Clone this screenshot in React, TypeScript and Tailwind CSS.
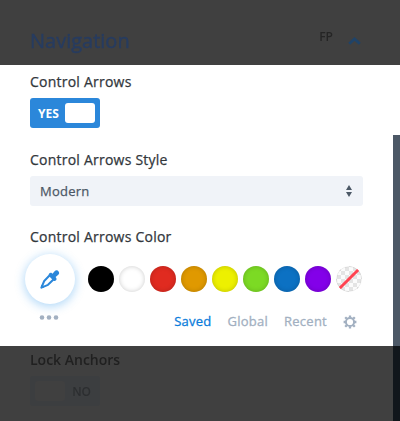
const swatches = [
  'bg-[#000000]',
  'bg-[#ffffff]',
  'bg-[#e02b20]',
  'bg-[#e09900]',
  'bg-[#edf000]',
  'bg-[#7cda24]',
  'bg-[#0c71c3]',
  'bg-[#8300e9]',
];

function Label({ children }: { children: string }) {
  return <div className="h-5 text-[14px] leading-5 font-medium tracking-[0.23px] whitespace-nowrap text-[#32373c] [-webkit-text-stroke:0.25px_#32373c]">{children}</div>;
}

function Header() {
  return (
    <header className="flex h-[65px] justify-between bg-[#404040] pr-[39px] pl-[30px]">
      <h2 className="pt-[27px] text-[20px] leading-7 font-medium text-[#273c60] blur-[0.6px] [-webkit-text-stroke:0.4px_#273c60]">Navigation</h2>
      <div className="flex gap-[15px] pt-[29px]">
        <span className="text-[12px] leading-4 font-semibold text-[#252525] blur-[0.7px]">FP</span>
        <svg className="mt-[8px] h-[8px] w-[13px] blur-[0.3px]" viewBox="0 0 13 8" fill="none" stroke="#1f4368" strokeWidth="2.8">
          <path d="M1.2 6.8 6.5 2 11.8 6.8" />
        </svg>
      </div>
    </header>
  );
}

function Dropper() {
  return (
    <svg className="h-5 w-5" viewBox="0 0 20 20" fill="none">
      <path d="M10.2 5.8 4.2 12 1.4 18.6 8 15.8 14.2 9.8" stroke="#2b87da" strokeWidth="2" strokeLinejoin="round" />
      <path
        d="M9.2 4.6c.7-1 2-1 2.7-.4l.6.5 2.1-2.4c1.2-1.4 3-1.4 4 .1.9 1.2.7 2.6-.6 3.7l-2.4 2 .5.7c.7.9.6 2-.3 2.8-.8.6-1.8.5-2.5-.2L9.4 7.6c-.8-.8-.9-2-.2-3Z"
        fill="#2b87da"
      />
      <path d="m1.2 15.8 3 2.8-3.4 1Z" fill="#2b87da" />
    </svg>
  );
}

function Gear() {
  return (
    <svg className="h-[14px] w-[14px]" viewBox="0 0 14 14" fill="none" stroke="#a2b0c1">
      <circle cx="7" cy="7" r="4.1" strokeWidth="2" />
      <path
        d="M7 .6v1.8M7 11.6v1.8M.6 7h1.8M11.6 7h1.8M2.2 2.2l1.6 1.6M10.2 10.2l1.6 1.6M2.2 11.8l1.6-1.6M10.2 3.8l1.6-1.6"
        strokeWidth="2.3"
      />
    </svg>
  );
}

function Transparent() {
  return (
    <svg className="h-[26px] w-[26px] rounded-full" viewBox="0 0 26 26">
      <defs>
        <pattern id="checker" x="1" y="1" width="8" height="8" patternUnits="userSpaceOnUse">
          <path d="M0 0h4v4H0zM4 4h4v4H4z" fill="#e4e4e4" />
        </pattern>
      </defs>
      <circle cx="13" cy="13" r="13" fill="#fbfbfb" />
      <circle cx="13" cy="13" r="13" fill="url(#checker)" />
      <circle cx="13" cy="13" r="12.5" fill="none" stroke="#000" strokeOpacity=".06" />
      <path d="M3.7 22.3 22.3 3.7" stroke="#ff4351" strokeWidth="3" />
    </svg>
  );
}

function ColorField() {
  return (
    <div className="mt-[7px] -ml-[5px] flex">
      <div className="flex w-[50px] flex-col items-center">
        <button className="flex h-[50px] w-[50px] items-center justify-center rounded-full bg-white shadow-[0_2px_10px_1px_rgba(43,150,235,0.35)]">
          <Dropper />
        </button>
        <svg className="mt-[11px] mr-[2px] h-[5px] w-[20px]" viewBox="0 0 20 5" fill="#a2b0c1">
          <circle cx="3" cy="2.5" r="2.3" />
          <circle cx="10" cy="2.5" r="2.3" />
          <circle cx="17" cy="2.5" r="2.3" />
        </svg>
      </div>
      <div className="ml-[13px] pt-[12px]">
        <div className="flex gap-[5px]">
          {swatches.map((color) => (
            <span key={color} className={`h-[26px] w-[26px] rounded-full shadow-[inset_0_0_5px_rgba(0,0,0,0.2)] ${color}`} />
          ))}
          <Transparent />
        </div>
        <div className="mt-[19px] flex h-5 items-center justify-end pr-[5px] text-[13px] leading-5 font-medium tracking-[0.25px] text-[#a2b0c1] [-webkit-text-stroke:0.3px]">
          <span className="text-[#0c7ddb]">Saved</span>
          <span className="ml-4">Global</span>
          <span className="ml-4">Recent</span>
          <span className="ml-4 pt-px"><Gear /></span>
        </div>
      </div>
    </div>
  );
}

export default function App() {
  return (
    <div className="h-[421px] w-[400px] overflow-hidden bg-white font-['Open_Sans',sans-serif]">
      <Header />
      <main className="flex h-[281px] justify-between">
        <div className="w-[363px] pt-[7px] pl-[30px]">
          <Label>Control Arrows</Label>
          <div className="mt-[6px] flex h-[30px] w-[70px] items-center justify-between rounded-[3px] bg-[#2b87da] pr-[5px] pl-[8px]">
            <span className="pt-px text-[12px] font-bold text-white">YES</span>
            <span className="h-5 w-[30px] rounded-[3px] bg-white" />
          </div>
          <div className="mt-[22px]"><Label>Control Arrows Style</Label></div>
          <div className="mt-[6px] flex h-[30px] items-center justify-between rounded-[3px] bg-[#f0f3f8] pr-[11px] pl-[10px]">
            <span className="pt-px text-[13px] font-medium tracking-[0.25px] text-[#4c5866] [-webkit-text-stroke:0.25px]">Modern</span>
            <svg className="h-3 w-[6px]" viewBox="0 0 6 12" fill="#4c5866">
              <path d="M3 0 6 5H0ZM3 12 0 7h6Z" />
            </svg>
          </div>
          <div className="mt-[21px]"><Label>Control Arrows Color</Label></div>
          <ColorField />
        </div>
        <div className="mt-[70px] w-[7px] bg-[#4c5866]" />
      </main>
      <footer className="flex h-[75px] justify-between bg-[#404040]">
        <div className="pt-[4px] pl-[30px] blur-[0.6px]">
          <div className="h-5 text-[14px] leading-5 font-semibold text-[#202020]">Lock Anchors</div>
          <div className="mt-[6px] flex h-[30px] w-[70px] items-center justify-between rounded-[3px] bg-[#3c3e40] pr-[9px] pl-[5px]">
            <span className="h-5 w-[30px] rounded-[3px] bg-[#404040]" />
            <span className="pt-px text-[12px] font-semibold text-[#2c2e30]">NO</span>
          </div>
        </div>
        <div className="w-[7px] bg-[#11161b]" />
      </footer>
    </div>
  );
}
